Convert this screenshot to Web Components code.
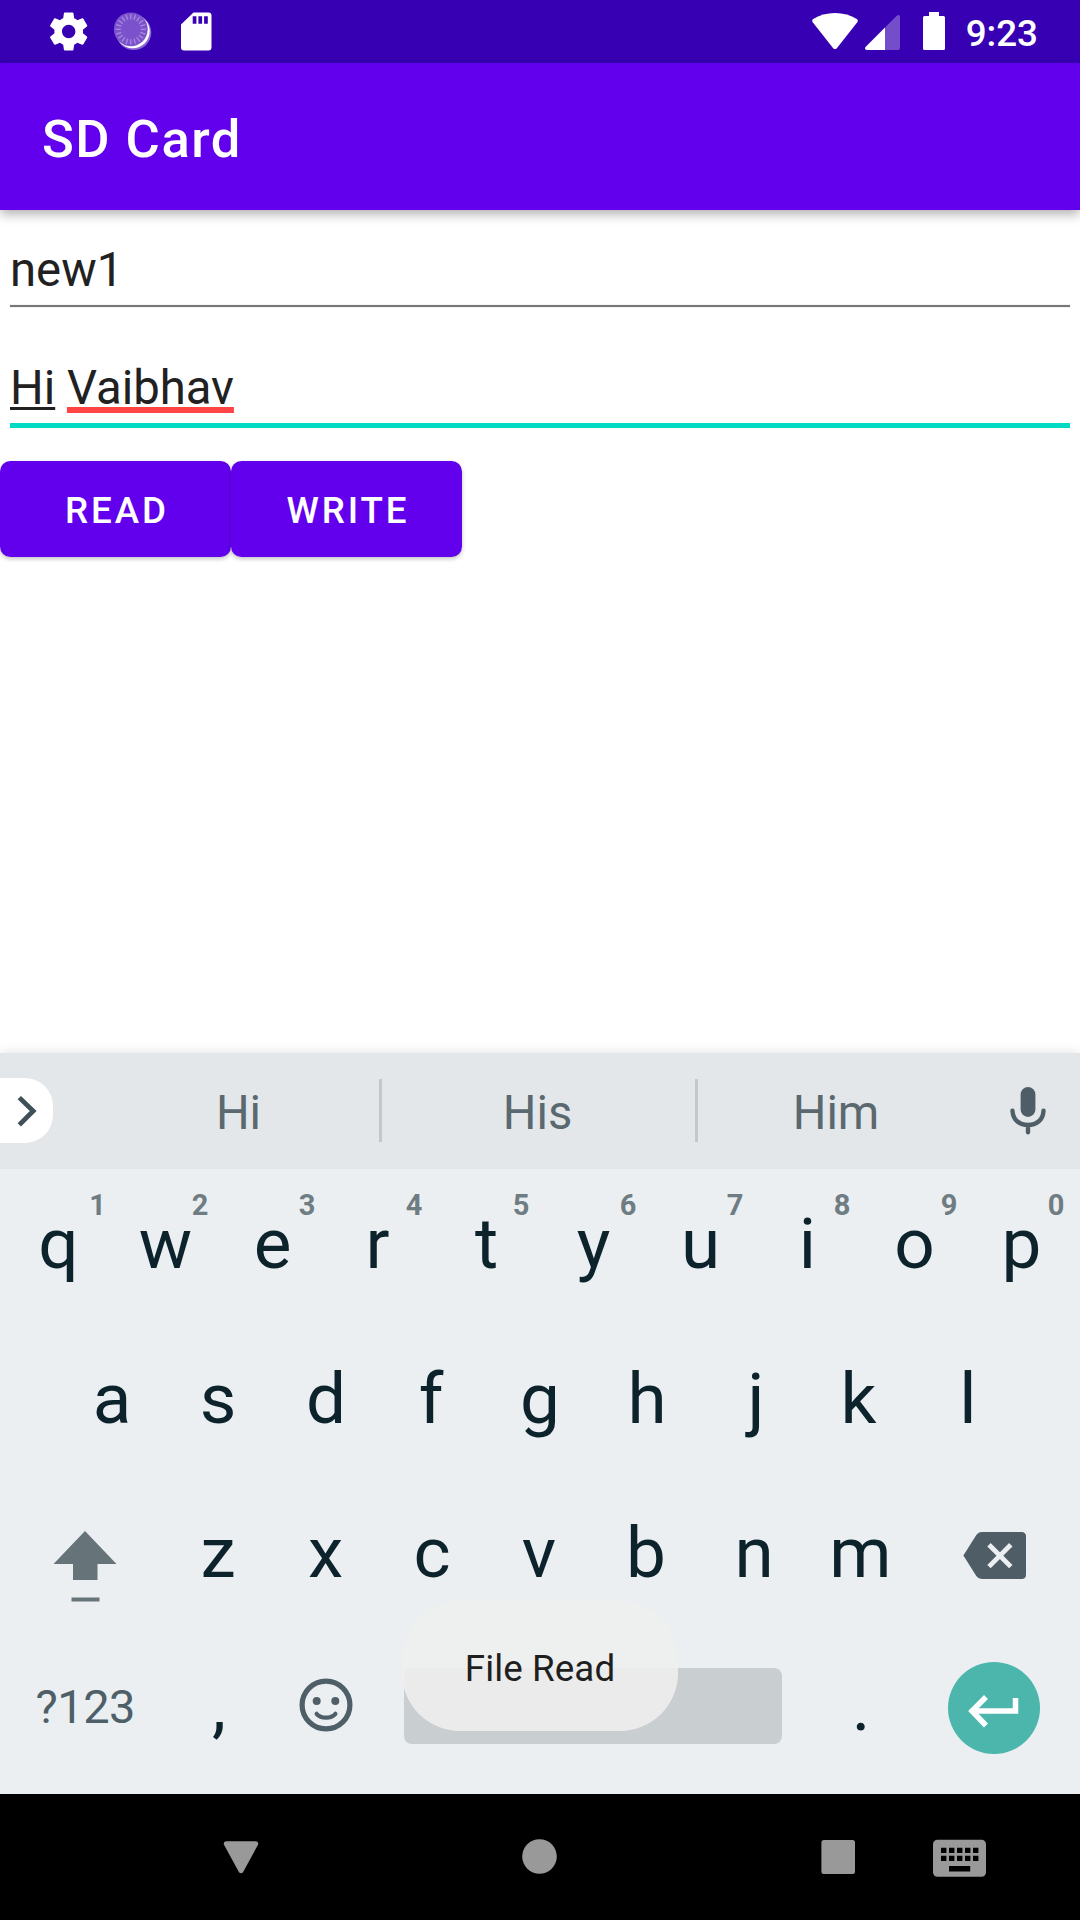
<!DOCTYPE html>
<html lang="en">
<head>
<meta charset="utf-8">
<title>SD Card</title>
<style>
  html, body { margin: 0; padding: 0; background: #fff; }
  body { font-family: Roboto, "Noto Sans", sans-serif; }
</style>
</head>
<body>
<device-screen>
  <status-bar slot="status"></status-bar>
  <app-bar slot="bar">SD Card</app-bar>
  <text-field>new1</text-field>
  <text-field focused><typo-mark>Hi</typo-mark> <typo-mark wrong>Vaibhav</typo-mark></text-field>
  <button-row>
    <raised-button>READ</raised-button>
    <raised-button>WRITE</raised-button>
  </button-row>
  <soft-keyboard slot="keyboard"></soft-keyboard>
  <nav-bar slot="nav"></nav-bar>
  <toast-message slot="toast">File Read</toast-message>
</device-screen>

<script>
const define = (name, html) => {
  const tpl = document.createElement('template');
  tpl.innerHTML = html.trim().replace('</style>\n', '</style>');
  customElements.define(name, class extends HTMLElement {
    constructor() {
      super();
      this.attachShadow({ mode: 'open' }).append(tpl.content.cloneNode(true));
    }
  });
};

define('device-screen', `
<style>
  :host { display: flex; flex-direction: column; position: relative; width: 1080px; height: 1920px; overflow: hidden; background: #fff; }
  main { flex: 1; min-height: 0; display: flex; flex-direction: column; padding-top: 32px; box-sizing: border-box; }
</style>
<slot name="status"></slot><slot name="bar"></slot>
<main><slot></slot></main>
<slot name="keyboard"></slot><slot name="nav"></slot><slot name="toast"></slot>`);

const ticks = Array.from({ length: 20 }, (_, i) =>
  `<path d="M17.3 2v5.300" transform="rotate(${i * 18} 17.3 17.3)"/>`).join('');

define('status-bar', `
<style>
  :host { display: flex; align-items: flex-start; height: 63px; box-sizing: border-box; background: #3700b3; padding: 12px 42px 0 49px; color: #fff; }
  svg { display: block; flex: none; }
  .sun { margin-left: 25px; }
  .card { margin-left: 29px; }
  .wifi { margin-left: auto; }
  .cell { margin-left: 7px; }
  .batt { margin-left: 23px; }
  time { margin-left: 21px; font-size: 36.75px; font-weight: 500; line-height: 43px; }
</style>
<svg width="39" height="39" viewBox="1.7 1.8 20.4 20.4" fill="#fff"><path d="M19.43 12.98c.04-.32.07-.64.07-.98s-.03-.66-.07-.98l2.11-1.65c.19-.15.24-.42.12-.64l-2-3.46c-.12-.22-.39-.3-.61-.22l-2.49 1c-.52-.4-1.08-.73-1.69-.98l-.38-2.65C14.46 2.18 14.25 2 14 2h-4c-.25 0-.46.18-.49.42l-.38 2.65c-.61.25-1.17.59-1.69.98l-2.49-1c-.23-.09-.49 0-.61.22l-2 3.46c-.13.22-.07.49.12.64l2.11 1.65c-.04.32-.07.65-.07.98s.03.66.07.98l-2.11 1.65c-.19.15-.24.42-.12.64l2 3.46c.12.22.39.3.61.22l2.49-1c.52.4 1.08.73 1.69.98l.38 2.65c.03.24.24.42.49.42h4c.25 0 .46-.18.49-.42l.38-2.65c.61-.25 1.17-.59 1.69-.98l2.49 1c.23.09.49 0 .61-.22l2-3.46c.12-.22.07-.49-.12-.64l-2.11-1.65zM12 15.5c-1.93 0-3.5-1.57-3.5-3.5s1.57-3.5 3.5-3.5 3.5 1.57 3.5 3.5-1.57 3.5-3.5 3.5z"/></svg>
<svg class="sun" width="39" height="39" viewBox="-.5 0 39 39">
  <circle cx="20.200" cy="20.500" r="17.600" fill="#8a66d2"/>
  <circle cx="19.200" cy="19.300" r="17" fill="#fff"/>
  <circle cx="17.300" cy="17.300" r="16.900" fill="#7c52cc"/>
  <g stroke="#a78bdd" stroke-width="1.300">${ticks}</g>
</svg>
<svg class="card" width="32" height="39" viewBox="1 0 32 39"><path fill="#fff" fill-rule="evenodd" d="M13.500 .6H28.500a3 3 0 0 1 3 3V35.400a3 3 0 0 1-3 3H4a3 3 0 0 1-3-3V12.500zM12.700 4.300v7.500h3.700v-7.500zM18.400 4.300v7.500h3.700v-7.500zM24.100 4.300v7.500h3.700v-7.500z"/></svg>
<svg class="wifi" width="46" height="39" viewBox="0 0 46 39"><path fill="#fff" d="M.7 10.200C-.1 9.100.1 7.800 1.200 7C7.300 3 14.800 1 23 1S38.700 3 44.800 7c1.100.8 1.300 2.100.5 3.200L25 35.900q-2 2.400-4 0z"/></svg>
<svg class="cell" width="35" height="39" viewBox="0 0 35 39"><path fill="#fff" fill-opacity=".3" d="M20 15.500L32 3.500q3-1.500 3 1V36q0 2-2 2H20z"/><path fill="#fff" d="M20 15.500V38H2q-3-.6-1.500-3z"/></svg>
<svg class="batt" width="22" height="38" viewBox="0 0 22 38"><path fill="#fff" d="M6 0H16V4H20.500Q22 4 22 5.500V36.500Q22 38 20.500 38H1.500Q0 38 0 36.500V5.500Q0 4 1.500 4H6z"/></svg>
<time>9:23</time>`);

define('app-bar', `
<style>
  :host { display: flex; align-items: center; height: 147px; box-sizing: border-box; padding: 4px 42px 0; background: #6200ee; color: #fff; font-size: 52.5px; font-weight: 500; letter-spacing: 1.5px; line-height: 62px; box-shadow: 0 4px 11px rgba(0,0,0,.32); }
</style><slot></slot>`);

define('text-field', `
<style>
  :host { display: flex; flex-direction: column; margin: 0 10px; height: 118px; font-size: 47.25px; line-height: 56px; color: #212121; }
  .value { white-space: pre; height: 56px; }
  .line { height: 2px; margin-top: 7px; background: #777; box-shadow: 0 0 1px #999; }
  :host([focused]) .line { height: 5px; background: #03dac5; box-shadow: none; }
</style>
<div class="value"><slot></slot></div><div class="line"></div>`);

define('typo-mark', `
<style>
  :host { display: inline; text-decoration: underline 3px #212121; text-underline-offset: 3px; text-decoration-skip-ink: none; }
  :host([wrong]) { text-decoration: underline 6px #ff4444; }
</style><slot></slot>`);

define('button-row', `
<style>:host { display: flex; margin-top: -17px; }</style><slot></slot>`);

define('raised-button', `
<style>
  :host { display: flex; align-items: center; justify-content: center; width: 231px; height: 96px; box-sizing: border-box; padding: 2px 0 0 3px; border-radius: 10.5px; background: #6200ee; color: #fff; font-size: 36.75px; font-weight: 500; letter-spacing: 2.900px; line-height: 43px; box-shadow: 0 2px 4px rgba(0,0,0,.24); }
</style><slot></slot>`);

define('key-cap', `
<style>
  :host { display: flex; align-items: flex-start; justify-content: center; position: relative; width: 107px; height: 154.5px; font-size: 71px; line-height: 84px; color: #0d232c; padding-top: 33px; box-sizing: border-box; }
  .hint { position: absolute; right: 10.5px; top: 19px; font-size: 29px; line-height: 34px; font-weight: 700; color: #6f7c82; }
  :host([one]) .hint { right: 6px; }
</style>
<slot></slot><span class="hint"><slot name="hint"></slot></span>`);

/* Optical side-bearing corrections, in pixels, for letters whose ink sits off centre. */
const optical = { r: -2, f: -2, k: -2.5, j: 2, z: -1, x: -.5, c: -1, v: -1, b: -1, s: -1, m: -.5 };
const keys = (s, hints = '') => [...s].map((c, i) => {
  const n = optical[c] || 0;
  const pad = n < 0 ? `padding-right:${-2 * n}px` : `padding-left:${2 * n}px`;
  return `<key-cap style="${pad}"${hints[i] === '1' ? ' one' : ''}>${c}${hints ? `<span slot="hint">${hints[i]}</span>` : ''}</key-cap>`;
}).join('');

define('suggestion-strip', `
<style>
  :host { display: flex; align-items: center; height: 116px; background: #e3e7ea; color: #5a686f; font-size: 47.25px; line-height: 56px; box-sizing: border-box; padding-bottom: 1px; }
  .left { width: 97px; display: flex; }
  .pill { display: flex; width: 52.500px; height: 65px; background: #fff; border-radius: 0 28px 28px 0; }
  .word { flex: none; display: flex; justify-content: center; padding-top: 5px; box-sizing: border-box; }
  .rule { width: 3px; height: 63px; background: #c3c8cb; }
  .a { width: 282px; padding-left: 1px; } .b { width: 313px; padding-right: 2px; } .c { width: 278px; padding-right: 2px; }
  .mic { flex: 1; display: flex; justify-content: center; }
  svg { display: block; }
</style>
<div class="left"><div class="pill"><svg width="53" height="65" viewBox="0 0 53 65"><path d="M19.500 19.500L33.500 33L19.500 47" fill="none" stroke="#3f5059" stroke-width="4.800"/></svg></div></div>
<div class="word a">Hi</div><div class="rule"></div>
<div class="word b">His</div><div class="rule"></div>
<div class="word c">Him</div>
<div class="mic"><svg width="36" height="50" viewBox="0 0 36 50"><rect x="10.600" y="1" width="14.800" height="30" rx="7.400" fill="#4f5e66"/><path d="M2.500 24.800C3 34.500 10 39 18 39S33 34.500 33.500 24.800M18 39v7.200" fill="none" stroke="#4f5e66" stroke-width="4.400" stroke-linecap="round"/></svg></div>`);

define('soft-keyboard', `
<style>
  :host { display: flex; flex-direction: column; height: 741px; background: #ebeff2; box-shadow: 0 0 11px rgba(0,0,0,.13); }
  .row { display: flex; justify-content: center; height: 154.5px; }
  .side { display: flex; flex: none; justify-content: center; align-items: flex-start; width: 160.5px; box-sizing: border-box; }
  .sym { font-size: 47px; letter-spacing: -.5px; line-height: 56px; color: #4f5f68; padding-top: 46.500px; }
  .emoji { width: 107px; padding: 45px 1px 0 0; }
  .space { width: 428px; padding: 35.500px 1.500px 0 0; }
  .space div { width: 378px; height: 76px; border-radius: 8px; background: #c9ced1; }
  .enter { padding: 29px 2px 0 0; }
  .shift { padding-top: 53px; }
  .erase { padding-top: 54px; }
  .period { padding-top: 31.500px; }
  svg { display: block; }
</style>
<suggestion-strip></suggestion-strip>
<div class="row">${keys('qwertyuiop', '1234567890')}</div>
<div class="row">${keys('asdfghjkl')}</div>
<div class="row">
  <div class="side shift"><svg width="64" height="71" viewBox="0 0 64 71" fill="#667379"><path d="M32 0L63.500 33H44.500V49H20V33H.5z"/><path d="M18.500 66.500H46.500V70.500H18.500z"/></svg></div>
  ${keys('zxcvbnm')}
  <div class="side erase"><svg width="64" height="47" viewBox="0 0 64 47"><path d="M.4 23.500L13.300 3Q15.300 0 18.500 0H58.500Q63 0 63 4.500V42.500Q63 47 58.500 47H18.500Q15.300 47 13.300 44z" fill="#4f5e66"/><path d="M26 12.800L47.800 34.600M47.800 12.800L26 34.600" stroke="#ebeff2" stroke-width="4.800"/></svg></div>
</div>
<div class="row">
  <div class="side sym">?123</div>
  <key-cap class="period">,</key-cap>
  <div class="side emoji"><svg width="54" height="54" viewBox="0 0 54 54"><circle cx="27" cy="27" r="23.900" fill="none" stroke="#4f5f68" stroke-width="5.200"/><circle cx="17.700" cy="23" r="4" fill="#4f5f68"/><circle cx="36.300" cy="23" r="4" fill="#4f5f68"/><path d="M17.600 35.800C22 41 32 41 36.400 35.800" fill="none" stroke="#4f5f68" stroke-width="4.200" stroke-linecap="round"/></svg></div>
  <div class="side space"><div></div></div>
  <key-cap class="period">.</key-cap>
  <div class="side enter"><svg width="92" height="92" viewBox="0 0 92 92"><circle cx="46" cy="46" r="46" fill="#4db6ac"/><path d="M67.500 36V49H25M38 35L24 49L38 63.500" fill="none" stroke="#fff" stroke-width="5.500"/></svg></div>
</div>`);

define('nav-bar', `
<style>
  :host { display: flex; align-items: flex-start; height: 126px; box-sizing: border-box; padding: 45px 0 0 223px; background: #000; z-index: 1; }
  svg { display: block; flex: none; }
  .home, .recent { margin-left: 263px; }
  .ime { margin-left: 77px; }
</style>
<svg width="36" height="36" viewBox="0 0 36 36" fill="#999"><path d="M3 2.300H33Q36 2.800 35 5.800L20 33.200Q18 35.500 16 33.200L1 5.800Q0 2.800 3 2.300z"/></svg>
<svg class="home" width="36" height="36" viewBox="0 0 36 36"><circle cx="17.500" cy="17.500" r="17.300" fill="#999"/></svg>
<svg class="recent" width="35" height="36" viewBox="0 0 35 36"><rect x=".4" y="1" width="33.600" height="34" rx="2.500" fill="#999"/></svg>
<svg class="ime" width="53" height="38" viewBox="0 -.8 53 38"><rect width="53" height="37" rx="4.500" fill="#999"/><path d="M8 8h5.400v5.300H8zM16 8h5.400v5.300H16zM24 8h5.400v5.300H24zM32 8h5.400v5.300H32zM40 8h5.400v5.300H40zM8 16h5.400v5.300H8zM16 16h5.400v5.300H16zM24 16h5.400v5.300H24zM32 16h5.400v5.300H32zM40 16h5.400v5.300H40zM16 26.200h21.200v5.500H16z" fill="#000"/></svg>`);

define('toast-message', `
<style>
  :host { position: absolute; left: 402px; top: 1601px; display: flex; align-items: center; justify-content: center; width: 276px; height: 130px; box-sizing: border-box; padding-top: 5px; border-radius: 58px; background: rgba(238,238,238,.9); color: #1f1f1f; font-size: 36.750px; letter-spacing: .1px; line-height: 43px; }
</style><slot></slot>`);
</script>
</body>
</html>
